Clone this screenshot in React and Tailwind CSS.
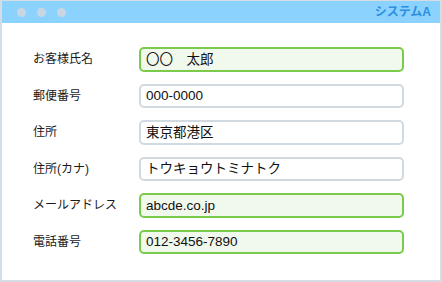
import React from 'react';

const fields = [
    {label: 'お客様氏名', value: '〇〇　太郎', filled: true},
    {label: '郵便番号', value: '000-0000', filled: false},
    {label: '住所', value: '東京都港区', filled: false},
    {label: '住所(カナ)', value: 'トウキョウトミナトク', filled: false},
    {label: 'メールアドレス', value: 'abcde.co.jp', filled: true},
    {label: '電話番号', value: '012-3456-7890', filled: true},
];

const App = () => {
    return (
        <div
            className="w-[442px] h-[282px] bg-white border-x-2 border-b-2 border-t border-[#d3dde3] flex flex-col"
            style={{fontFamily: '"Liberation Sans", "Noto Sans CJK JP", sans-serif'}}
        >
            {/* Title bar */}
            <div className="h-[22px] bg-[#8bd2fe] flex items-center justify-between pl-[15px] pr-[9px]">
                <div className="flex gap-[11px]">
                    <span className="w-[9px] h-[9px] rounded-full bg-[#c7d6e0]"></span>
                    <span className="w-[9px] h-[9px] rounded-full bg-[#c7d6e0]"></span>
                    <span className="w-[9px] h-[9px] rounded-full bg-[#c7d6e0]"></span>
                </div>
                <span className="text-[12px] font-bold text-[#2a8fe0] leading-none">システムA</span>
            </div>

            {/* Form */}
            <div className="flex flex-col gap-[12px] pt-[24px] pl-[31px]">
                {fields.map((f) => (
                    <div key={f.label} className="flex items-center">
                        <div className="w-[106px] text-[12px] text-[#1a1a1a] leading-none">{f.label}</div>
                        <div
                            className={
                                f.filled
                                    ? 'w-[265px] h-[24.5px] rounded-[5px] border-2 border-[#7acb4c] bg-[#f1f8ec] flex items-center px-[5px]'
                                    : 'w-[265px] h-[24.5px] rounded-[5px] border-2 border-[#d0dae0] bg-white flex items-center px-[5px]'
                            }
                        >
                            <span className="text-[13.5px] text-[#111] leading-none">{f.value}</span>
                        </div>
                    </div>
                ))}
            </div>
        </div>
    );
};

export default App;
